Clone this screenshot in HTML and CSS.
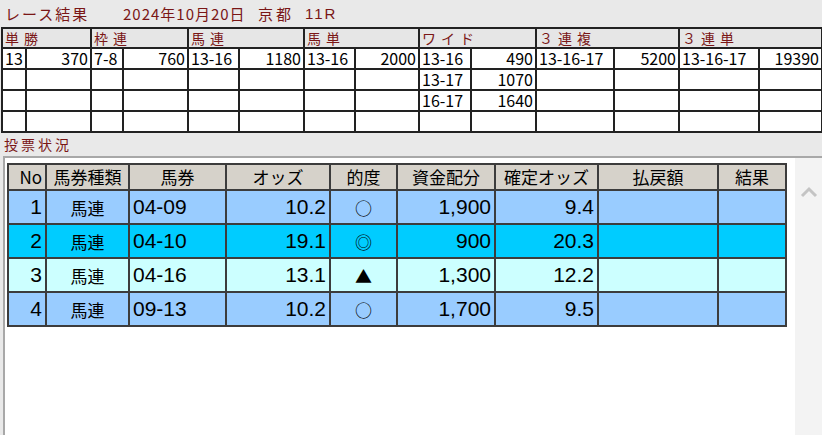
FILE: index.html
```html
<!DOCTYPE html>
<html lang="ja">
<head>
  <meta charset="UTF-8" />
  <title>レース結果</title>
<link rel="stylesheet" href="styles.css">
</head>
<body>

<!-- Title -->
<div class="title">
  <span class="title-main">レース結果</span>
  <span class="title-date">2024年10月20日</span>
  <span class="title-place">京都</span>
  <span class="title-race">11R</span>
</div>

<!-- Race result -->
<table class="result">
  <colgroup>
    <col style="width:24px"><col style="width:65px">
    <col style="width:32px"><col style="width:65px">
    <col style="width:51px"><col style="width:65px">
    <col style="width:51px"><col style="width:64px">
    <col style="width:52px"><col style="width:65px">
    <col style="width:78px"><col style="width:65px">
    <col style="width:80px"><col style="width:63px">
  </colgroup>
  <tr class="result-head">
    <th colspan="2">単勝</th>
    <th colspan="2">枠連</th>
    <th colspan="2">馬連</th>
    <th colspan="2">馬単</th>
    <th colspan="2">ワイド</th>
    <th colspan="2">３連複</th>
    <th colspan="2">３連単</th>
  </tr>
  <tr>
    <td>13</td><td class="r">370</td>
    <td>7-8</td><td class="r">760</td>
    <td>13-16</td><td class="r">1180</td>
    <td>13-16</td><td class="r">2000</td>
    <td>13-16</td><td class="r">490</td>
    <td>13-16-17</td><td class="r">5200</td>
    <td>13-16-17</td><td class="r">19390</td>
  </tr>
  <tr>
    <td></td><td></td><td></td><td></td><td></td><td></td><td></td><td></td>
    <td>13-17</td><td class="r">1070</td>
    <td></td><td></td><td></td><td></td>
  </tr>
  <tr>
    <td></td><td></td><td></td><td></td><td></td><td></td><td></td><td></td>
    <td>16-17</td><td class="r">1640</td>
    <td></td><td></td><td></td><td></td>
  </tr>
  <tr>
    <td></td><td></td><td></td><td></td><td></td><td></td><td></td>
    <td></td><td></td><td></td><td></td><td></td><td></td><td></td>
  </tr>
</table>

<!-- Voting status -->
<div class="section-label">投票状況</div>

<div class="vote-panel">
  <div class="vote-area">
    <table class="vote">
      <colgroup>
        <col style="width:38px"><col style="width:83px"><col style="width:97px">
        <col style="width:104px"><col style="width:67px"><col style="width:98px">
        <col style="width:103px"><col style="width:120px"><col style="width:68px">
      </colgroup>
      <tr class="vote-head">
        <th class="no">No</th>
        <th>馬券種類</th>
        <th>馬券</th>
        <th>オッズ</th>
        <th>的度</th>
        <th>資金配分</th>
        <th>確定オッズ</th>
        <th>払戻額</th>
        <th>結果</th>
      </tr>
      <tr class="row-a">
        <td class="num r">1</td><td class="c">馬連</td><td class="num">04-09</td>
        <td class="num r">10.2</td><td class="c mark">○</td><td class="num r">1,900</td>
        <td class="num r">9.4</td><td></td><td></td>
      </tr>
      <tr class="row-b">
        <td class="num r">2</td><td class="c">馬連</td><td class="num">04-10</td>
        <td class="num r">19.1</td><td class="c mark">◎</td><td class="num r">900</td>
        <td class="num r">20.3</td><td></td><td></td>
      </tr>
      <tr class="row-c">
        <td class="num r">3</td><td class="c">馬連</td><td class="num">04-16</td>
        <td class="num r">13.1</td><td class="c mark">▲</td><td class="num r">1,300</td>
        <td class="num r">12.2</td><td></td><td></td>
      </tr>
      <tr class="row-a">
        <td class="num r">4</td><td class="c">馬連</td><td class="num">09-13</td>
        <td class="num r">10.2</td><td class="c mark">○</td><td class="num r">1,700</td>
        <td class="num r">9.5</td><td></td><td></td>
      </tr>
    </table>
  </div>
  <div class="scrollbar">
    <svg width="18" height="14" viewBox="0 0 18 14">
      <polyline points="2,11 9,4 16,11" fill="none" stroke="#c4c4c4" stroke-width="3"/>
    </svg>
  </div>
</div>

</body>
</html>
```

FILE: styles.css
```css
body {
  margin: 0;
  height: 435px;
  overflow: hidden;
  background-color: #e9e9e9;
  font-family: "Noto Sans CJK JP", sans-serif;
  color: #000;
}

/* title line */
.title {
  height: 27px;
  display: flex;
  align-items: center;
  padding-left: 5px;
  color: #7a1616;
  font-size: 15px;
  box-sizing: border-box;
}

.title-main {
  letter-spacing: 2px;
  width: 118px;
}

.title-date {
  font-family: "Liberation Sans Narrow", "Arial Narrow", "Noto Sans CJK JP", sans-serif;
  letter-spacing: 1px;
  width: 135px;
}

.title-place {
  letter-spacing: 3px;
  width: 47px;
}

.title-race {
  font-family: "Liberation Sans Narrow", "Arial Narrow", sans-serif;
  letter-spacing: 2px;
}

/* race result grid */
.result {
  table-layout: fixed;
  border-collapse: collapse;
  width: 820px;
  margin-left: 1px;
  background: #fff;
  font-family: "Liberation Sans Narrow", "Arial Narrow", "Noto Sans CJK JP", sans-serif;
  font-size: 16px;
}

.result th,
.result td {
  border: 2px solid #222;
  height: 19px;
  padding: 0 2px;
  white-space: nowrap;
  line-height: 19px;
  vertical-align: middle;
}

.result-head th {
  background: #e6e6e6;
  color: #7a1616;
  font-family: "Noto Sans CJK JP", sans-serif;
  font-size: 14px;
  font-weight: normal;
  text-align: left;
  letter-spacing: 5px;
  height: 18px;
  line-height: 18px;
}

.result td.r {
  text-align: right;
}

.section-label {
  height: 23px;
  padding: 3px 0 0 4px;
  box-sizing: border-box;
  color: #7a1616;
  font-size: 14px;
  letter-spacing: 3px;
  line-height: 16px;
}

/* voting panel */
.vote-panel {
  display: flex;
  height: 280px;
  margin-left: 3px;
  background: #fff;
  border-top: 2px solid #a8a8a8;
  border-left: 2px solid #a8a8a8;
}

.vote-area {
  flex: 1;
  padding: 5px 0 0 2px;
}

.vote {
  table-layout: fixed;
  border-collapse: collapse;
  width: 778px;
  font-size: 17px;
}

.vote th,
.vote td {
  border: 2px solid #3c3c3c;
  padding: 0 3px;
  white-space: nowrap;
  overflow: hidden;
}

.vote-head th {
  background: #d6d2ca;
  font-weight: normal;
  height: 24px;
  line-height: 22px;
}

.vote-head th.no {
  text-align: right;
}

.vote td {
  height: 32px;
}

.vote td.num {
  font-family: "Liberation Sans Narrow", "Arial Narrow", sans-serif;
  font-size: 21px;
}

.vote td.r {
  text-align: right;
}

.vote td.c {
  text-align: center;
}

.vote td.mark {
  font-size: 17px;
}

.row-a td { background: #99ccff; }
.row-b td { background: #00ccff; }
.row-c td { background: #ccffff; }

.scrollbar {
  width: 27px;
  background: #f3f3f3;
  display: flex;
  justify-content: center;
  padding-top: 27px;
  box-sizing: border-box;
}
```
